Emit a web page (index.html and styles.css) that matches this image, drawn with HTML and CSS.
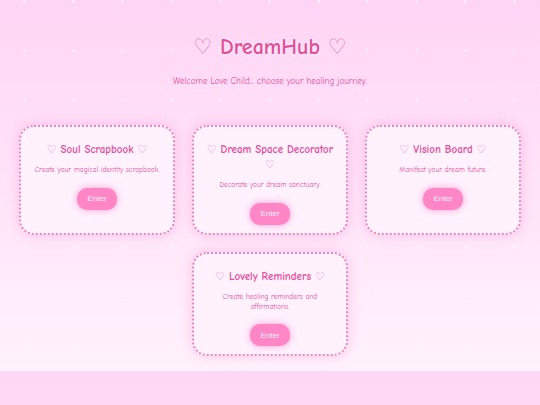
FILE: index.html
```html
<!DOCTYPE html>
<html lang="en">
<head>
<meta charset="utf-8">
<title>DreamHub</title>
<link rel="stylesheet" href="styles.css">
</head>
<body>
<div class="page">
  <header class="hero">
    <h1 class="logo"><span class="heart">♡</span> DreamHub <span class="heart">♡</span></h1>
    <p class="tagline">Welcome Love Child... choose your healing journey.</p>
  </header>
  <main class="cards">
    <section class="card">
      <h3 class="card-title"><span class="heart">♡</span> Soul Scrapbook <span class="heart">♡</span></h3>
      <p class="card-text">Create your magical identity scrapbook.</p>
      <button class="enter">Enter</button>
    </section>
    <section class="card">
      <h3 class="card-title"><span class="heart">♡</span> Dream Space Decorator <span class="heart">♡</span></h3>
      <p class="card-text">Decorate your dream sanctuary.</p>
      <button class="enter">Enter</button>
    </section>
    <section class="card">
      <h3 class="card-title"><span class="heart">♡</span> Vision Board <span class="heart">♡</span></h3>
      <p class="card-text">Manifest your dream future.</p>
      <button class="enter">Enter</button>
    </section>
    <section class="card">
      <h3 class="card-title"><span class="heart">♡</span> Lovely Reminders <span class="heart">♡</span></h3>
      <p class="card-text">Create healing reminders and affirmations.</p>
      <button class="enter">Enter</button>
    </section>
  </main>
</div>
</body>
</html>
```
FILE: styles.css
```css
html {
  background: #ffd8f6;
}
body {
  margin: 0;
  font-family: "Comic Sans MS", "Comic Neue", Lato, "DejaVu Sans", sans-serif;
}
.page {
  padding: 34px 0 15px;
  background:
    radial-gradient(circle, rgba(255,255,255,0.55) 1px, transparent 1.6px) 0 26px / 49px 49px,
    linear-gradient(#ffd5f5, #fff2fc);
}
.hero {
  text-align: center;
}
.logo {
  margin: 0;
  font-size: 22px;
  line-height: 26px;
  font-weight: 700;
  color: #e24e98;
  text-shadow: 0 0 3px #fff;
}
.logo .heart {
  font-weight: 400;
  font-family: "DejaVu Sans", sans-serif;
  font-size: 21px;
  color: #e65fa6;
}
.tagline {
  margin: 15px 0 0;
  font-size: 9px;
  line-height: 12px;
  color: #e0529f;
}
.cards {
  margin-top: 38px;
  display: flex;
  flex-wrap: wrap;
  justify-content: center;
  gap: 17px 17px;
}
.card {
  width: 156px;
  box-sizing: border-box;
  padding: 8px 10px;
  border: 2px dotted #ec84c2;
  border-radius: 15px;
  background: #fff2fd;
  box-shadow: 0 0 12px rgba(255, 140, 205, 0.45);
  text-align: center;
}
.card-title {
  margin: 7px 0 0;
  font-size: 11px;
  line-height: 15px;
  font-weight: 700;
  color: #e24f9a;
}
.card-title .heart {
  font-weight: 400;
  font-family: "DejaVu Sans", sans-serif;
  color: #e872b2;
}
.card-text {
  margin: 8px 0 12px;
  font-size: 7.4px;
  line-height: 10px;
  color: #e0529f;
}
.enter {
  width: 40px;
  height: 22px;
  padding: 0;
  border: none;
  border-radius: 10px;
  background: #ff86c6;
  color: #fff0f8;
  font-family: "Liberation Sans", Arial, sans-serif;
  font-size: 8px;
  box-shadow: 0 0 7px rgba(255, 120, 195, 0.7);
}
```
